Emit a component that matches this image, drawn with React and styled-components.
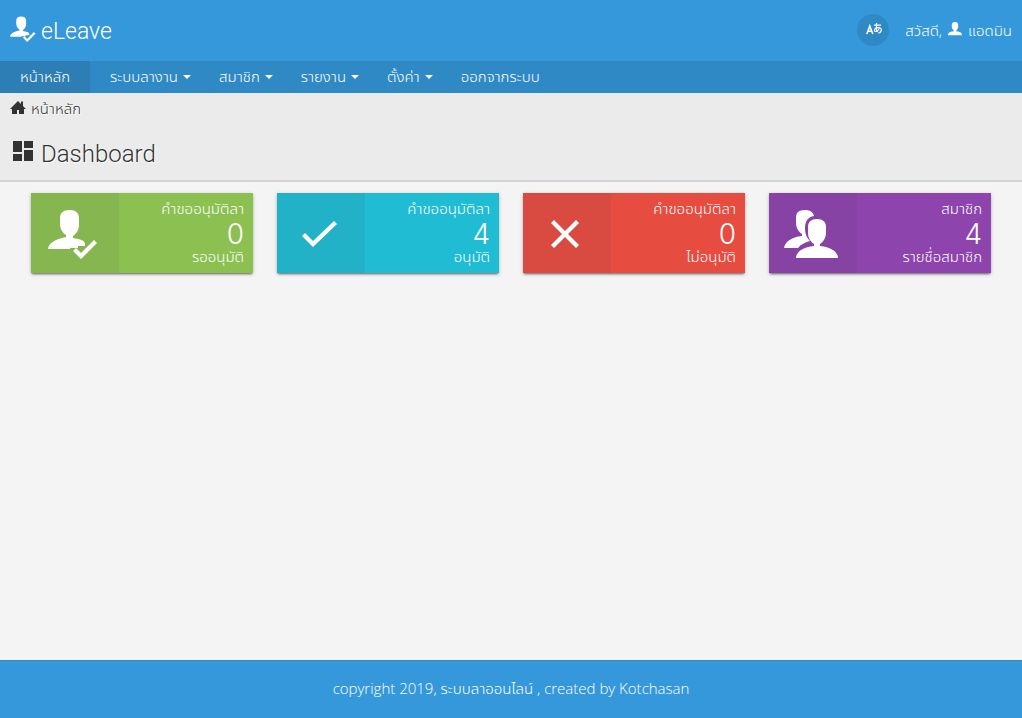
import React from 'react'
import styled, { createGlobalStyle } from 'styled-components'

const GlobalStyle = createGlobalStyle`
  * {
    box-sizing: border-box;
  }

  body {
    margin: 0;
    background: #f4f4f4;
    color: #333;
    font-family: 'Open Sans', 'Noto Sans Thai', 'Noto Sans', sans-serif;
    font-size: 15px;
    font-weight: 300;
    line-height: 24px;
  }

  a {
    color: inherit;
    text-decoration: none;
  }
`

const Page = styled.div`
  display: flex;
  flex-direction: column;
  min-height: 100vh;
`

const Header = styled.header`
  display: flex;
  align-items: center;
  justify-content: space-between;
  height: 61px;
  padding: 0 10px 2px;
  background: #3498db;
  color: #fff;
`

const Logo = styled.a`
  display: flex;
  align-items: center;
  gap: 5px;
  padding-top: 4px;
  font-family: Roboto, sans-serif;
  font-size: 23px;

  svg {
    margin-bottom: 6px;
  }
`

const UserArea = styled.div`
  display: flex;
  align-items: center;
  gap: 16px;
`

const LanguageButton = styled.button`
  display: flex;
  align-items: center;
  justify-content: center;
  width: 32px;
  height: 32px;
  padding: 0 0 2px 2px;
  border: 0;
  border-radius: 50%;
  background: #2f89c5;
  color: #fff;
  cursor: pointer;
`

const Greeting = styled.div`
  display: flex;
  align-items: center;
  gap: 6px;
`

const UserLink = styled.a`
  display: flex;
  align-items: center;
  gap: 6px;

  svg {
    margin-bottom: 2px;
  }
`

const Nav = styled.nav`
  background: #2f89c5;
  color: #fff;
`

const Menu = styled.ul`
  display: flex;
  margin: 0;
  padding: 0;
  list-style: none;
`

const MenuLink = styled.a`
  display: flex;
  align-items: center;
  gap: 5px;
  height: 32px;
  padding: 0 ${props => (props.$dropdown ? 8 : 20)}px 2px 20px;
  background: ${props => (props.$active ? '#2d7eb5' : 'transparent')};
  white-space: nowrap;
`

const Caret = styled.span`
  margin-top: 2px;
  border: 4px solid transparent;
  border-top-color: #fff;
  border-bottom: 0;
`

const Heading = styled.section`
  border-bottom: 2px solid #d3d3d3;
  background: #ebebeb;
  text-shadow: 1px 1px 0 #fff;
`

const Breadcrumb = styled.a`
  display: flex;
  align-items: center;
  gap: 5px;
  height: 32px;
  padding: 0 10px 2px;
`

const Title = styled.h1`
  display: flex;
  align-items: center;
  gap: 8px;
  height: 55px;
  margin: 0;
  padding: 2px 13px 0;
  font-family: Roboto, sans-serif;
  font-size: 24px;
  font-weight: 300;

  svg {
    margin-bottom: 2px;
  }
`

const Main = styled.main`
  flex: 1;
`

const Cards = styled.div`
  display: grid;
  grid-template-columns: repeat(4, 1fr);
  gap: 24px;
  padding: 11px 31px;
`

const CardLink = styled.a`
  display: grid;
  grid-template-columns: 88px 1fr;
  height: 80px;
  background: ${props => props.$color};
  box-shadow: 0 2px 2px -1px rgba(0, 0, 0, 0.5), 0 1px 4px rgba(0, 0, 0, 0.2);
  color: #fff;
`

const CardIcon = styled.span`
  display: flex;
  align-items: center;
  justify-content: center;
  padding: 2px 4px 0 0;
  background: rgba(68, 68, 68, 0.08);
`

const CardBody = styled.span`
  display: flex;
  flex-direction: column;
  justify-content: center;
  padding: 0 9px 2px 0;
  text-align: right;
`

const CardValue = styled.strong`
  padding-top: 4px;
  font-family: Inter, sans-serif;
  font-size: 28px;
  font-weight: 300;
  line-height: 20px;
`

const Footer = styled.footer`
  height: 58px;
  padding: 15px;
  border-top: 1px solid #2f89c5;
  background: #3498db;
  color: #fff;
  text-align: center;
`

const MemberCheckIcon = ({ size }) => (
  <svg width={size} height={size} viewBox="0 0 50 50" fill="currentColor">
    <path d="M21.5 1C28 1 31 4 31 9v7c0 5-3 9-6 11v2c6 1 12 2 12 6v2h-7v2h-8v1H0c0-5 7-10 18-12v-2c-3-2-6-6-6-11V9c0-5 3-8 9.500-8Z" />
    <path d="m25 42 3-3 5 5 13-13 3 3-16 16Z" />
  </svg>
)

const MembersIcon = () => (
  <svg width="54" height="50" viewBox="0 0 54 50" fill="currentColor">
    <path d="M12 9C12 4 14 1 21 1c5 0 8 2 9 6-6 1-9 5-9 12 0 6 2 10 5 13-4 1-9 3-12 7H0c1-6 7-11 18-12v-2c-3-2-6-6-6-11Z" />
    <path d="M24 18c0-5 3-8 9-8s9 3 9 8v6c0 5-3 9-6 11v2c11 1 18 6 18 12H12c0-6 7-11 18-12v-2c-3-2-6-6-6-11Z" />
  </svg>
)

const MemberIcon = () => (
  <svg width="14" height="14" viewBox="0 0 14 14" fill="currentColor">
    <path d="M7 0c2.200 0 3.200 1.200 3.200 3v1.800C10.200 6.400 9 8 8.300 8.300v1c3 .3 5.700 1.300 5.700 3.900H0c0-2.600 2.700-3.600 5.700-3.900v-1C5 8 3.800 6.400 3.800 4.800V3C3.800 1.200 4.800 0 7 0Z" />
  </svg>
)

const HomeIcon = () => (
  <svg width="16" height="16" viewBox="0 0 16 16" fill="currentColor">
    <path d="M0 9 8 1l3 3V1.500h2V6l3 3h-2v5H9v-4H7v4H2V9Z" />
  </svg>
)

const DashboardIcon = () => (
  <svg width="20" height="24" viewBox="0 0 20 24" fill="currentColor">
    <path d="M0 0h9v11H0zM11 0h9v7h-9zM0 13h9v7H0zM11 9h9v11h-9z" />
  </svg>
)

const CheckIcon = () => (
  <svg width="36" height="28" viewBox="0 0 36 28" fill="currentColor">
    <path d="m1 16 3-3 8 8L33 1l3 3-24 23Z" />
  </svg>
)

const CloseIcon = () => (
  <svg width="28" height="28" viewBox="0 0 28 28" fill="currentColor">
    <path d="m0 3 3-3 11 11L25 0l3 3-11 11 11 11-3 3-11-11L3 28l-3-3 11-11Z" />
  </svg>
)

const LanguageIcon = () => (
  <svg
    width="16"
    height="14"
    viewBox="0 0 16 14"
    fill="none"
    stroke="currentColor"
  >
    <path d="m.8 12 3-8 3 8M1.800 9.300h4" strokeWidth="1.600" />
    <path
      d="M8 3.200h7M10.500 1v6.500c0 1.500.5 2 1 2.500M13.500 5c-.5 3-2.500 4.500-4 4.500S8 6.200 11 5.700s4.300.3 4.300 2.300-1.300 2.700-3 3"
      strokeWidth="1.200"
    />
  </svg>
)

const menus = [
  { label: 'หน้าหลัก', active: true },
  { label: 'ระบบลางาน', dropdown: true },
  { label: 'สมาชิก', dropdown: true },
  { label: 'รายงาน', dropdown: true },
  { label: 'ตั้งค่า', dropdown: true },
  { label: 'ออกจากระบบ' },
]

const cards = [
  {
    color: '#8cc152',
    icon: <MemberCheckIcon size={50} />,
    title: 'คำขออนุมัติลา',
    value: 0,
    detail: 'รออนุมัติ',
  },
  {
    color: '#1fbcd3',
    icon: <CheckIcon />,
    title: 'คำขออนุมัติลา',
    value: 4,
    detail: 'อนุมัติ',
  },
  {
    color: '#e74c40',
    icon: <CloseIcon />,
    title: 'คำขออนุมัติลา',
    value: 0,
    detail: 'ไม่อนุมัติ',
  },
  {
    color: '#8e44ad',
    icon: <MembersIcon />,
    title: 'สมาชิก',
    value: 4,
    detail: 'รายชื่อสมาชิก',
  },
]

const App = () => (
  <Page>
    <GlobalStyle />
    <Header>
      <Logo href="#home">
        <MemberCheckIcon size={26} />
        eLeave
      </Logo>
      <UserArea>
        <LanguageButton type="button" aria-label="Language">
          <LanguageIcon />
        </LanguageButton>
        <Greeting>
          สวัสดี,
          <UserLink href="#profile">
            <MemberIcon />
            แอดมิน
          </UserLink>
        </Greeting>
      </UserArea>
    </Header>
    <Nav>
      <Menu>
        {menus.map(({ label, active, dropdown }) => (
          <li key={label}>
            <MenuLink href="#menu" $active={active} $dropdown={dropdown}>
              {label}
              {dropdown && <Caret />}
            </MenuLink>
          </li>
        ))}
      </Menu>
    </Nav>
    <Main>
      <Heading>
        <Breadcrumb href="#home">
          <HomeIcon />
          หน้าหลัก
        </Breadcrumb>
        <Title>
          <DashboardIcon />
          Dashboard
        </Title>
      </Heading>
      <Cards>
        {cards.map(({ color, icon, title, value, detail }) => (
          <CardLink key={detail} href="#card" $color={color}>
            <CardIcon>{icon}</CardIcon>
            <CardBody>
              <span>{title}</span>
              <CardValue>{value}</CardValue>
              <span>{detail}</span>
            </CardBody>
          </CardLink>
        ))}
      </Cards>
    </Main>
    <Footer>copyright 2019, ระบบลาออนไลน์ , created by Kotchasan</Footer>
  </Page>
)

export default App
